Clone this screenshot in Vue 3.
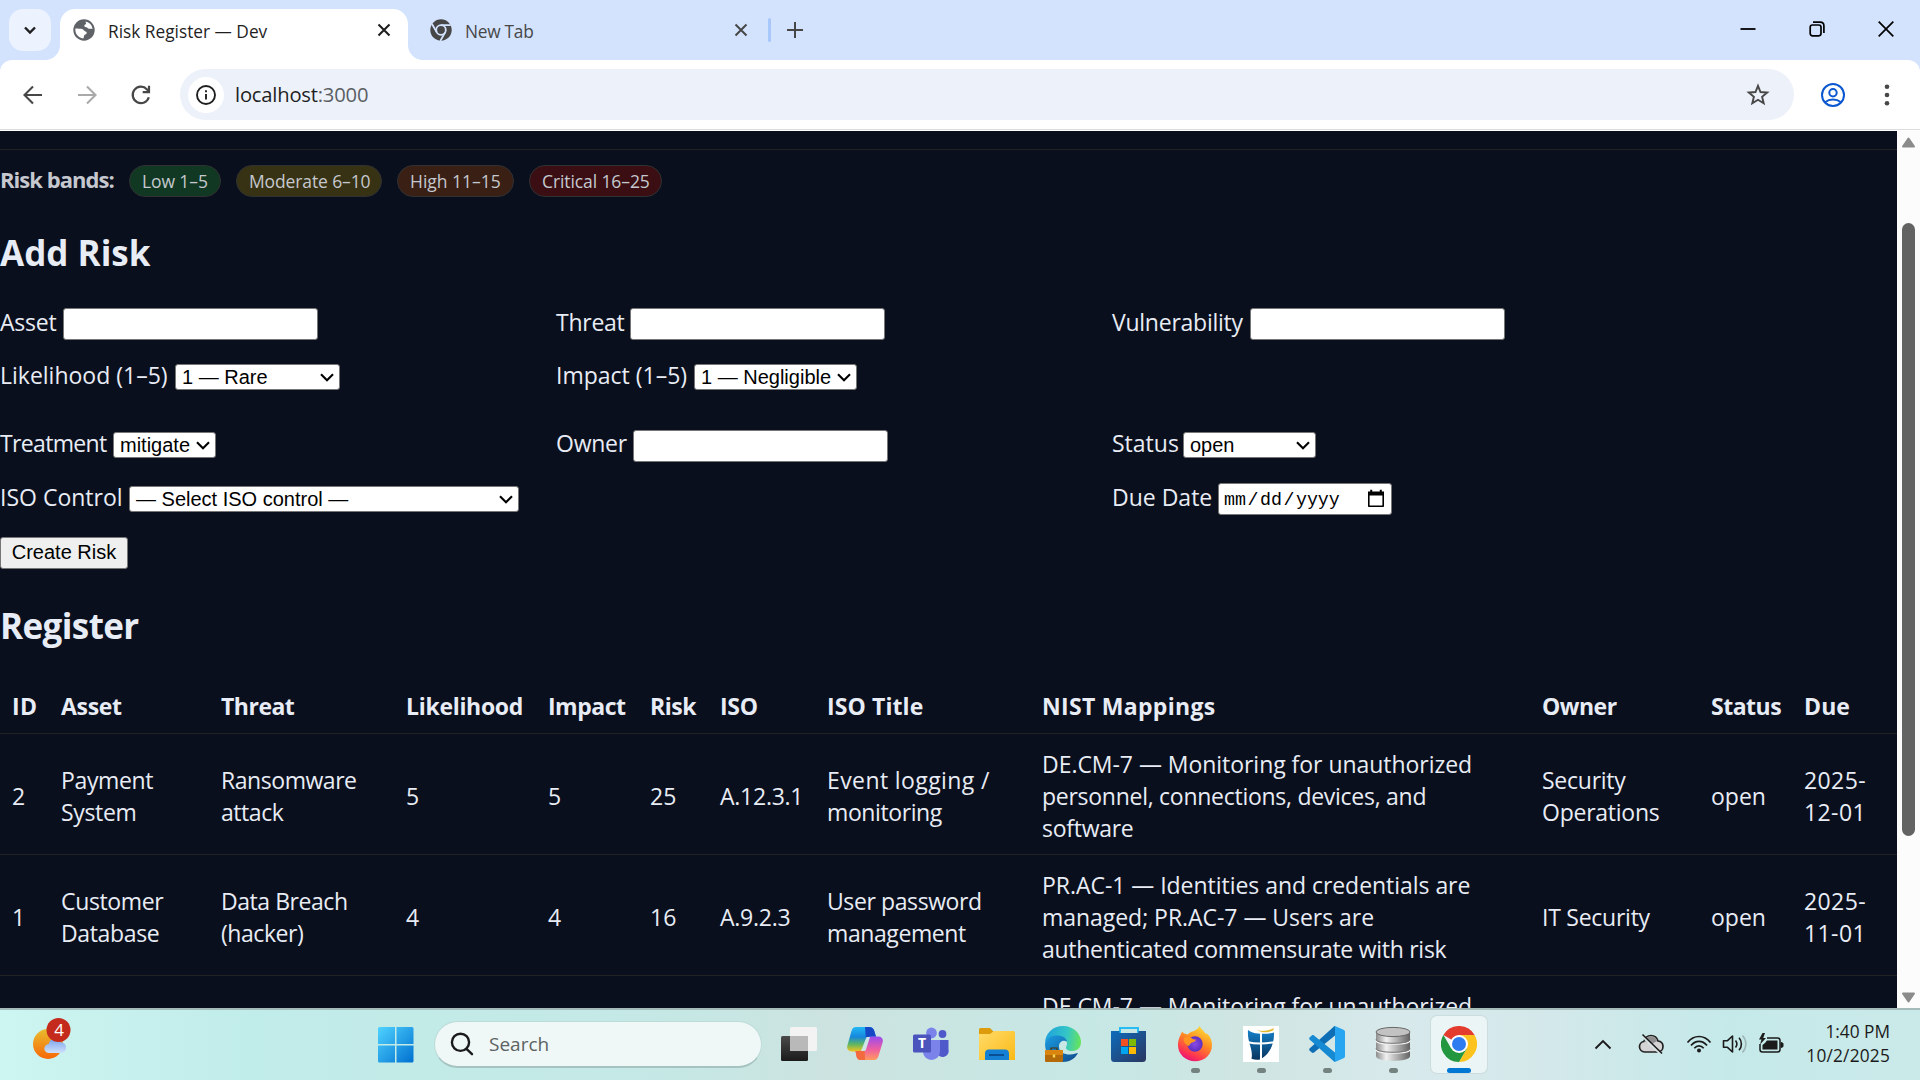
<script setup>
const bands = [
  { name: 'Low 1–5', tone: 'low' },
  { name: 'Moderate 6–10', tone: 'moderate' },
  { name: 'High 11–15', tone: 'high' },
  { name: 'Critical 16–25', tone: 'critical' },
]

const formRows = [
  [
    { label: 'Asset', labelWidth: 63, tone: 'snug', type: 'text', width: 255 },
    { label: 'Threat', labelWidth: 74, tone: 'snug', type: 'text', width: 255 },
    { label: 'Vulnerability', labelWidth: 138, tone: 'snug', type: 'text', width: 255 },
  ],
  [
    { label: 'Likelihood (1–5)', labelWidth: 175, type: 'select', value: '1 — Rare', width: 165 },
    { label: 'Impact (1–5)', labelWidth: 138, type: 'select', value: '1 — Negligible', width: 163 },
  ],
  [
    { label: 'Treatment', labelWidth: 113, tone: 'tight', type: 'select', value: 'mitigate', width: 103 },
    { label: 'Owner', labelWidth: 77, tone: 'snug', type: 'text', width: 255 },
    { label: 'Status', labelWidth: 71, type: 'select', value: 'open', width: 133 },
  ],
  [
    { label: 'ISO Control', labelWidth: 129, type: 'select', value: '— Select ISO control —', width: 390 },
    null,
    { label: 'Due Date', labelWidth: 106, type: 'date', width: 174 },
  ],
]

const columns = [
  { title: 'ID', width: 49, tone: 'wide' },
  { title: 'Asset', width: 160 },
  { title: 'Threat', width: 185, tone: 'snug' },
  { title: 'Likelihood', width: 142 },
  { title: 'Impact', width: 102, tone: 'snug' },
  { title: 'Risk', width: 70, tone: 'snug' },
  { title: 'ISO', width: 107 },
  { title: 'ISO Title', width: 215, tone: 'open' },
  { title: 'NIST Mappings', width: 500, tone: 'wide' },
  { title: 'Owner', width: 169, tone: 'snug' },
  { title: 'Status', width: 93, tone: 'snug' },
  { title: 'Due', width: 105, tone: 'open' },
]

const risks = [
  ['2', 'Payment\nSystem', 'Ransomware\nattack', '5', '5', '25', 'A.12.3.1', 'Event logging /\nmonitoring',
    'DE.CM-7 — Monitoring for unauthorized\npersonnel, connections, devices, and\nsoftware',
    'Security\nOperations', 'open', '2025-\n12-01'],
  ['1', 'Customer\nDatabase', 'Data Breach\n(hacker)', '4', '4', '16', 'A.9.2.3', 'User password\nmanagement',
    'PR.AC-1 — Identities and credentials are\nmanaged; PR.AC-7 — Users are\nauthenticated commensurate with risk',
    'IT Security', 'open', '2025-\n11-01'],
  ['', '', '', '', '', '', '', '',
    'DE.CM-7 — Monitoring for unauthorized\npersonnel, connections, devices, and\nsoftware', '', '', ''],
]

const columnTones = ['', 'c-asset', 'c-threat', '', '', '', 'c-iso', 'c-title', 'c-nist', 'c-owner', '', 'c-due']

const lineTone = (line) => {
  if (line.includes('—')) return 'dashed'
  if (line.endsWith('/')) return 'slashed'
  return ''
}
</script>

<template>
  <div class="screen">
    <header class="tabstrip">
      <button class="tab-search">
        <svg width="14" height="14" viewBox="0 0 14 14"><path d="M2 4.5 7 9.5l5-5" fill="none" stroke="#1f1f1f" stroke-width="2.4" /></svg>
      </button>
      <div class="tab active">
        <svg class="favicon" width="22" height="22" viewBox="0 0 22 22">
          <circle cx="11" cy="11" r="10.7" fill="#5f6368" />
          <path d="M12.6 2.5c3.8.8 6.500 3.600 6.900 7.500-1-.5-2.200-.2-3.500-.3-1.500-.1-1.400-1.400-2.700-1.500-1.700-.1-2.300-.9-1.900-1.900.4-.9 1.700-.7 1.700-2 0-.8-.7-1-.5-1.800z" fill="#fff" />
          <path d="M2.400 9.600c2.600.2 4.900.2 6.700.5 1.700.3 1.800 2 3.400 2.400 1.300.3 1.600 1.300.9 2.300-.6.9-1.900.7-2.300 1.800-.3.900-.1 1.900-.9 2.900C5 18.800 1.800 14.600 2.400 9.600z" fill="#fff" />
        </svg>
        <span class="tab-title">Risk Register — Dev</span>
        <svg class="tab-close" width="14" height="14" viewBox="0 0 14 14"><path d="M1.500 1.500l11 11M12.500 1.500l-11 11" stroke="#1f1f1f" stroke-width="2.100" /></svg>
      </div>
      <div class="tab idle">
        <svg class="favicon" width="22" height="22" viewBox="0 0 22 22">
          <circle cx="11" cy="11" r="10.7" fill="#474747" />
          <circle cx="11" cy="11" r="4.800" fill="none" stroke="#d3e3fd" stroke-width="1.800" />
          <path d="M11 6.200h9.700M6.800 13.400 2 5M15.100 13.400 10.300 22" stroke="#d3e3fd" stroke-width="1.800" />
        </svg>
        <span class="tab-title">New Tab</span>
        <svg class="tab-close" width="14" height="14" viewBox="0 0 14 14"><path d="M1.500 1.500l11 11M12.500 1.500l-11 11" stroke="#474747" stroke-width="2" /></svg>
      </div>
      <i class="divider"></i>
      <svg class="new-tab" width="16" height="16" viewBox="0 0 16 16"><path d="M8 0v16M0 8h16" stroke="#474747" stroke-width="2" /></svg>
      <div class="window-controls">
        <svg width="16" height="16" viewBox="0 0 16 16"><path d="M.5 8h15" stroke="#000" stroke-width="1.800" /></svg>
        <svg width="16" height="16" viewBox="0 0 16 16" fill="none" stroke="#000" stroke-width="1.700"><rect x="1.200" y="4" width="10.800" height="10.800" rx="2.200" /><path d="M4 1.200h7.200c2.300 0 3.700 1.400 3.700 3.700V12" /></svg>
        <svg width="16" height="16" viewBox="0 0 16 16"><path d="M.7.7l14.600 14.600M15.300.7.700 15.300" stroke="#000" stroke-width="1.700" /></svg>
      </div>
    </header>

    <div class="toolbar">
      <svg class="nav-icon" width="24" height="24" viewBox="0 0 24 24" fill="none" stroke="#474747" stroke-width="2.100"><path d="M21 12H4M12 3.500 3.500 12l8.500 8.500" /></svg>
      <svg class="nav-icon" width="24" height="24" viewBox="0 0 24 24" fill="none" stroke="#a9a9a9" stroke-width="2.100"><path d="M3 12h17M12 3.500l8.500 8.500-8.500 8.500" /></svg>
      <svg class="nav-icon" width="24" height="24" viewBox="0 0 24 24" fill="none" stroke="#474747" stroke-width="2.200"><path d="M19.800 14.200a8.200 8.200 0 1 1-1.800-7.800l1.600 1.900" /><path d="M20 2.800v6.300h-6.300" /></svg>
      <div class="omnibox">
        <span class="site-info">
          <svg width="22" height="22" viewBox="0 0 22 22" fill="none" stroke="#1f1f1f" stroke-width="1.900"><circle cx="11" cy="11" r="9" /><path d="M11 10v5.500M11 6.300v2" /></svg>
        </span>
        <span class="url">localhost<em>:3000</em></span>
        <svg class="star" width="24" height="24" viewBox="0 0 24 24"><path d="M12 2.800l2.500 6.200 6.700.5-5.100 4.300 1.600 6.500L12 16.800l-5.700 3.500 1.600-6.500-5.100-4.300 6.700-.5z" fill="none" stroke="#474747" stroke-width="1.900" /></svg>
      </div>
      <svg class="profile" width="26" height="26" viewBox="0 0 26 26" fill="none" stroke="#0b57d0" stroke-width="2"><circle cx="13" cy="13" r="11" /><circle cx="13" cy="10.700" r="3.700" /><path d="M5 20.200c2.300-1.800 5-2.700 8-2.700s5.700.9 8 2.700" /></svg>
      <svg class="more" width="6" height="24" viewBox="0 0 6 24" fill="#474747"><circle cx="3" cy="3.700" r="2.300" /><circle cx="3" cy="12" r="2.300" /><circle cx="3" cy="20.300" r="2.300" /></svg>
    </div>

    <div class="viewport">
      <main class="page">
        <div class="legend">
          <strong>Risk bands:</strong>
          <span v-for="b in bands" :key="b.tone" class="pill" :class="b.tone">{{ b.name }}</span>
        </div>

        <h2 class="add-title">Add Risk</h2>
        <form class="risk-form" @submit.prevent>
          <div v-for="(row, r) in formRows" :key="r" class="form-row" :class="{ spaced: r === 2 }">
            <div v-for="(field, f) in row" :key="f" class="form-cell">
              <label v-if="field" class="field">
                <span class="field-label" :class="field.tone" :style="{ width: field.labelWidth + 'px' }">{{ field.label }}</span>
                <input v-if="field.type === 'text'" type="text" class="text-input" :style="{ width: field.width + 'px' }" />
                <span v-else-if="field.type === 'select'" class="select" :style="{ width: field.width + 'px' }">
                  <span>{{ field.value }}</span>
                  <svg width="14" height="9" viewBox="0 0 14 9"><path d="M1 1.300 7 7.300l6-6" fill="none" stroke="#000" stroke-width="2.100" /></svg>
                </span>
                <span v-else class="date-input" :style="{ width: field.width + 'px' }">
                  <span>mm</span><i>/</i><span>dd</span><i>/</i><span>yyyy</span>
                  <svg width="18" height="19" viewBox="0 0 18 19"><path d="M1.800 4.200v13h14.400v-13z" fill="none" stroke="#000" stroke-width="1.600" stroke-linejoin="round" /><path d="M1 2.600h16v4H1zM3.200.8h2v3h-2zM12.800.8h2v3h-2z" fill="#000" /></svg>
                </span>
              </label>
            </div>
          </div>
          <button class="create">Create Risk</button>
        </form>

        <h2 class="register-title">Register</h2>
        <table class="register">
          <colgroup><col v-for="c in columns" :key="c.title" :style="{ width: c.width + 'px' }" /></colgroup>
          <thead>
            <tr><th v-for="c in columns" :key="c.title" :class="c.tone">{{ c.title }}</th></tr>
          </thead>
          <tbody>
            <tr v-for="(risk, i) in risks" :key="i">
              <td v-for="(cell, j) in risk" :key="j" :class="columnTones[j]">
                <div v-for="(line, k) in cell.split('\n')" :key="k" :class="lineTone(line)">{{ line }}</div>
              </td>
            </tr>
          </tbody>
        </table>
      </main>
      <div class="scrollbar">
        <svg width="15" height="11" viewBox="0 0 15 11"><path d="M7.500 1.500 13 9.500H2z" fill="#8b8b8b" stroke="#8b8b8b" stroke-width="2" stroke-linejoin="round" /></svg>
        <i class="thumb"></i>
        <svg width="15" height="11" viewBox="0 0 15 11"><path d="M7.500 9.500 13 1.500H2z" fill="#8b8b8b" stroke="#8b8b8b" stroke-width="2" stroke-linejoin="round" /></svg>
      </div>
    </div>

    <footer class="taskbar">
      <div class="weather">
        <svg width="42" height="46" viewBox="0 0 42 46">
          <defs>
            <linearGradient id="sun" x1="0" y1="0" x2="0" y2="1"><stop offset="0" stop-color="#e9bd2f" /><stop offset="1" stop-color="#f76707" /></linearGradient>
            <linearGradient id="cloud" x1="0" y1="0" x2="0" y2="1"><stop offset="0" stop-color="#7ba5ee" /><stop offset="1" stop-color="#cfe0fb" /></linearGradient>
          </defs>
          <circle cx="18" cy="29" r="15" fill="url(#sun)" />
          <path d="M19 38a4.500 4.500 0 0 1-.3-9 6.300 6.300 0 0 1 11.800-1.700 5.400 5.400 0 0 1 1.200 10.700z" fill="url(#cloud)" />
          <circle cx="28.500" cy="15" r="12" fill="#c42b1c" />
        </svg>
        <span class="badge">4</span>
      </div>

      <svg class="start" width="36" height="36" viewBox="0 0 36 36">
        <defs><linearGradient id="win" x1="0" y1="0" x2="1" y2="1"><stop offset="0" stop-color="#4fd3ff" /><stop offset="1" stop-color="#0070d0" /></linearGradient></defs>
        <path d="M1.500 0H17v17H0V1.500A1.500 1.500 0 0 1 1.500 0zM18.500 0H34a1.500 1.500 0 0 1 1.500 1.500V17h-17zM0 18.500h17v17H1.500A1.500 1.500 0 0 1 0 34zM18.500 18.500h17V34a1.500 1.500 0 0 1-1.500 1.500H18.500z" fill="url(#win)" />
      </svg>

      <div class="search">
        <svg width="24" height="24" viewBox="0 0 24 24" fill="none" stroke="#1b1b1b" stroke-width="2.400" stroke-linecap="round"><circle cx="10.500" cy="10.300" r="8.600" /><path d="M16.500 16.800l5.500 5.400" /></svg>
        <span>Search</span>
      </div>

      <div class="apps">
        <span class="app"><svg width="36" height="36" viewBox="0 0 36 36">
          <defs><linearGradient id="tv" x1="0" y1="0" x2="0" y2="1"><stop offset="0" stop-color="#4a4a4a" /><stop offset="1" stop-color="#1b1b1b" /></linearGradient></defs>
          <rect x="0" y="10" width="27" height="25" rx="1.500" fill="url(#tv)" />
          <rect x="9" y="1" width="27" height="24" rx="1.500" fill="#f3f3f3" /><path d="M9 10h18v15H9z" fill="#b9b9b9" />
        </svg></span>

        <span class="app"><svg width="36" height="36" viewBox="0 0 36 36">
          <defs>
            <linearGradient id="cpA" x1="0" y1="0" x2="0" y2="1"><stop offset="0" stop-color="#22b8f5" /><stop offset=".4" stop-color="#1687dd" /><stop offset=".7" stop-color="#5db564" /><stop offset="1" stop-color="#f4c61c" /></linearGradient>
            <linearGradient id="cpB" x1="0" y1="0" x2="0" y2="1"><stop offset="0" stop-color="#9a4bf0" /><stop offset=".55" stop-color="#ee5fa0" /><stop offset="1" stop-color="#ff9a5c" /></linearGradient>
          </defs>
          <path d="M9 1h13c3 0 4.500 1.500 5.300 4L29 11h-5c-3 0-4.500 1-5.500 4L16 22c-1 2.500-2.500 3.500-5 3.500H5c-4 0-5.500-2.500-4.600-6L4.500 5C5.300 2.300 6.500 1 9 1z" fill="url(#cpA)" />
          <path d="M18 1h4c3 0 4.500 1.500 5.300 4L29 10.500h-5c-3 0-4 1-5 3.500z" fill="#1648c5" />
          <path d="M27 34H14c-3 0-4-1.500-4.600-4L8.500 25H12c3 0 4.500-1 5.500-4L20 14c1-2.500 2-3.500 4.500-3.500H31c4 0 5.500 2.500 4.600 6L31.500 30c-.8 2.700-2 4-4.500 4z" fill="url(#cpB)" />
          <path d="M18 34h-4c-3 0-4-1.500-4.600-4L8.500 25H12c3 0 4.500-1 5.500-3.500z" fill="#f26a3d" />
          <path d="M19.500 11H23l-4 12.500c-.5 1.200-1 1.500-2 1.500h-3z" fill="#cbe6e5" />
        </svg></span>

        <span class="app"><svg width="36" height="36" viewBox="0 0 36 36">
          <circle cx="29.500" cy="8" r="3.900" fill="#5059c9" /><circle cx="18.500" cy="7" r="5.400" fill="#7b83eb" />
          <path d="M24 14h11.500v9.500a5.500 5.500 0 0 1-11.500 3z" fill="#5059c9" />
          <path d="M10 14h17v11.500a8.500 8.500 0 0 1-17 0z" fill="#7b83eb" />
          <rect x="0" y="8.500" width="18" height="18" rx="1.500" fill="#4b53bc" />
        </svg><b class="teams-letter">T</b></span>

        <span class="app"><svg width="36" height="36" viewBox="0 0 36 36">
          <defs><linearGradient id="fold" x1="0" y1="0" x2="1" y2="1"><stop offset="0" stop-color="#ffdc6b" /><stop offset="1" stop-color="#fbb915" /></linearGradient></defs>
          <path d="M1.500 2H11l3.500 3.500L12 12H0V3.500A1.500 1.500 0 0 1 1.500 2z" fill="#dd9c0b" />
          <path d="M0 8h11l4-3h19.500A1.500 1.500 0 0 1 36 6.500V34H0z" fill="url(#fold)" />
          <path d="M6 34v-6.500a4 4 0 0 1 4-4h16a4 4 0 0 1 4 4V34z" fill="#1480d3" /><path d="M10 29h15" stroke="#0a4f94" stroke-width="2" />
        </svg></span>

        <span class="app"><svg width="36" height="36" viewBox="0 0 36 36">
          <defs>
            <linearGradient id="edA" x1="0" y1=".4" x2="1" y2=".5"><stop offset="0" stop-color="#1fa2dc" /><stop offset=".6" stop-color="#35c6c6" /><stop offset="1" stop-color="#66e45a" /></linearGradient>
            <linearGradient id="edB" x1="0" y1="0" x2="1" y2="1"><stop offset="0" stop-color="#1b9de2" /><stop offset="1" stop-color="#114a8b" /></linearGradient>
          </defs>
          <path d="M0 18C0 7 8 0 18 0c11 0 18 8 18 16 0 6-4 9-9 9-4 0-6-1.500-6-3.500 0-1 1-1.500 1-4C22 13 18 10 12 10 6 10 1 13 0 18z" fill="url(#edA)" />
          <path d="M0 18C1 12 6 9.500 12 9.500c5 0 9 2 10 6-5-2-8 1-8 5 0 6 5 8 11 8 4 0 6-1.500 8-1.500C30 33 24 36 18 36 7 36 0 28 0 18z" fill="url(#edB)" />
          <rect x="0" y="24" width="18" height="12" rx="1" fill="#b46a08" /><path d="M0 24h18v5H0z" fill="#d98510" /><path d="M6 24v-2h6v2" fill="none" stroke="#4b3206" stroke-width="1.200" /><path d="M7.800 28.500h2.400v3H7.800z" fill="#ffd84a" />
        </svg></span>

        <span class="app"><svg width="36" height="36" viewBox="0 0 36 36">
          <defs><linearGradient id="store" x1="0" y1="0" x2="1" y2="1"><stop offset="0" stop-color="#0e6cbd" /><stop offset="1" stop-color="#2b365e" /></linearGradient></defs>
          <path d="M9 9V2h18v7" fill="none" stroke="#27bdf3" stroke-width="2" />
          <path d="M0 5h8.500v2h19V5H35v27.500A3.500 3.500 0 0 1 31.500 36h-28A3.500 3.500 0 0 1 0 32.500z" fill="url(#store)" />
          <path d="M10 13h7v7h-7z" fill="#f25022" /><path d="M18 13h7v7h-7z" fill="#7fba00" /><path d="M10 21h7v7h-7z" fill="#00a4ef" /><path d="M18 21h7v7h-7z" fill="#ffb900" />
        </svg></span>

        <span class="app running"><svg width="36" height="36" viewBox="0 0 36 36">
          <defs>
            <linearGradient id="ffA" x1=".8" y1="0" x2=".3" y2="1"><stop offset="0" stop-color="#ffe43a" /><stop offset=".45" stop-color="#ff8a22" /><stop offset=".8" stop-color="#ff3750" /><stop offset="1" stop-color="#e5107c" /></linearGradient>
            <radialGradient id="ffB"><stop offset="0" stop-color="#8b4be8" /><stop offset="1" stop-color="#5b2fc0" /></radialGradient>
          </defs>
          <path d="M5 5.500c1.500 2 3 2.500 5.500 3 2-2 4-3 6-3.200C19 4 21.500 2.500 22.500 0c1.500 3 4 4.500 5.500 7 1.500 1 2 .5 2.500 1C33.500 11 35 14.500 35 19c0 9.500-7.500 16.300-16.800 16.300S1 28.500 1 19.300C1 13 3 11 5 5.500z" fill="url(#ffA)" />
          <circle cx="18" cy="18" r="7.700" fill="url(#ffB)" />
          <path d="M7 12c3-1.500 6-1.500 8 .5 1 1 3 1 4 1-.5 2.500-3 2.500-5 3.500-1 1-1 2.500-2.500 3C8 18 6 15 7 12z" fill="#ff9420" />
        </svg></span>

        <span class="app running"><svg width="36" height="36" viewBox="0 0 36 36">
          <defs><linearGradient id="flag" x1="0" y1="0" x2="0" y2="1"><stop offset="0" stop-color="#1580c9" /><stop offset="1" stop-color="#0a355f" /></linearGradient></defs>
          <path d="M0 0h36v36H0z" fill="#fff" />
          <path d="M5 4c3 2.200 6 3.200 10 3.500 5 .6 11 .2 16-1C31.500 19 26 29 17 33.500c-3 .5-6 .2-8.500-.8C10.500 22 4 17 5 4z" fill="url(#flag)" />
          <path d="M4 16c8 2 18 2 28 0M18 6v30" fill="none" stroke="#fff" stroke-width="2" />
          <path d="M13 3.500c6.500 1.700 13 1 18-2v2.700C26 7.500 18 7.800 13 3.500z" fill="#e2b82c" stroke="#fff" stroke-width=".8" />
        </svg></span>

        <span class="app running"><svg width="36" height="36" viewBox="0 0 36 36">
          <path d="M26 0v9.500L5 26.500c-.8.600-1.500.6-2.200 0L.8 24.700c-.8-.8-.8-1.700 0-2.500L25 .5z" fill="#0d6db5" />
          <path d="M26 36v-9.500L5 9.500C4.200 8.900 3.500 8.900 2.800 9.500L.8 11.300c-.8.800-.8 1.700 0 2.500L25 35.500z" fill="#1689d3" />
          <path d="M26 0l8.500 3.700c1 .5 1.500 1.200 1.500 2.300v24c0 1.100-.5 1.800-1.500 2.300L26 36z" fill="#27a5f0" />
        </svg></span>

        <span class="app running"><svg width="36" height="36" viewBox="0 0 36 36">
          <defs><linearGradient id="db"><stop offset="0" stop-color="#8c8c8c" /><stop offset=".3" stop-color="#f1f1f1" /><stop offset="1" stop-color="#626262" /></linearGradient></defs>
          <path d="M1 6v24c0 6.500 34 6.500 34 0V6z" fill="url(#db)" />
          <ellipse cx="18" cy="6" rx="17" ry="4.600" fill="#c2c2c2" stroke="#686868" stroke-width="1" />
          <path d="M1 14.500c0 5 34 5 34 0M1 23.500c0 5 34 5 34 0" fill="none" stroke="#f0f0f0" stroke-width="1.200" /><path d="M1 13.500c0 5 34 5 34 0M1 22.500c0 5 34 5 34 0" fill="none" stroke="#777" stroke-width="1" />
        </svg></span>

        <span class="app current"><svg width="36" height="36" viewBox="0 0 36 36">
          <path d="M18 18 2.400 9A18 18 0 0 1 33.600 9z" fill="#e33b2e" />
          <path d="M18 9h15.600A18 18 0 0 1 18 36l7.800-13.500z" fill="#fcc31e" />
          <path d="M25.800 22.500 18 36A18 18 0 0 1 2.400 9l7.800 13.500z" fill="#22973f" />
          <circle cx="18" cy="18" r="9" fill="#fff" /><circle cx="18" cy="18" r="7" fill="#2f7bf0" />
        </svg></span>
      </div>

      <div class="tray">
        <svg class="chevron" width="18" height="12" viewBox="0 0 18 12"><path d="M1.500 10.500 9 3l7.500 7.500" fill="none" stroke="#1b1b1b" stroke-width="1.900" /></svg>
        <svg class="onedrive" width="26" height="24" viewBox="0 0 26 24">
          <path d="M6.500 20a5.300 5.300 0 0 1-.7-10.500C7 5.500 10 3.500 13 3.500c3.500 0 6 2 7 5.500 3 .3 5 2.500 5 5.500 0 3.200-2.300 5.500-5.500 5.500z" fill="#d4d4d4" stroke="#222" stroke-width="1.700" />
          <path d="M6.500 9.500C8 5.500 11 4.300 13.500 4.400c3 .2 4.800 1.800 5.600 4.600l-5 3z" fill="#8f8f8f" />
          <path d="M4.500 4 22.500 21.500" stroke="#dbe6e6" stroke-width="2.800" /><path d="M4.500 2.500 24 21.500" stroke="#1b1b1b" stroke-width="1.600" />
        </svg>
        <svg class="wifi" width="26" height="20" viewBox="0 0 26 20" fill="none" stroke="#1b1b1b" stroke-width="1.700"><path d="M1.500 8.500c6.500-8 16.500-8 23 0M5 11.500c4.600-5.500 11.400-5.500 16 0M8.300 14.300c2.800-3.200 6.600-3.200 9.400 0" /><circle cx="13" cy="16.500" r="2" fill="#1b1b1b" stroke="none" /></svg>
        <svg class="speaker" width="26" height="22" viewBox="0 0 26 22" fill="none" stroke="#1b1b1b" stroke-width="1.600"><path d="M1.500 7.700h4L10.500 3v16l-5-4.700h-4z" stroke-linejoin="round" /><path d="M13.500 7.500c1.600 2 1.600 5 0 7M17 4.800c3.200 3.500 3.200 9 0 12.400" /><path d="M20.500 2.500c4.500 5 4.500 12 0 17" stroke="#9fb8b8" /></svg>
        <svg class="battery" width="26" height="22" viewBox="0 0 26 22"><path d="M9 5h10.500A2.500 2.500 0 0 1 22 7.500v9a2.500 2.500 0 0 1-2.500 2.500h-15A2.500 2.500 0 0 1 2 16.500V11" fill="none" stroke="#1b1b1b" stroke-width="1.500" /><path d="M9 7.500h10.500v9h-15V12L7 10z" fill="#1b1b1b" /><path d="M23 9.500l2 .8v3.400l-2 .8z" fill="#1b1b1b" stroke="#1b1b1b" /><path d="M4.500 0 1 6.500h2.500L2 11.500 8 5H5.200L7 0z" fill="#1b1b1b" /></svg>
        <div class="clock"><span>1:40 PM</span><span class="date">10/2/2025</span></div>
      </div>
    </footer>
  </div>
</template>

<style>
body {
  margin: 0;
  overflow: hidden;
}
</style>

<style scoped>
.screen {
  width: 1920px;
  height: 1080px;
  display: flex;
  flex-direction: column;
  overflow: hidden;
  font-family: "Open Sans", "Noto Sans", sans-serif;
  background: #d3e3fd;
}
.screen * { box-sizing: border-box; }
svg { display: block; flex: none; }
i, em { font-style: normal; }

/* Tab strip */
.tabstrip {
  height: 60px;
  flex: none;
  display: flex;
  padding: 9px 26px 0 9px;
}
.tab-search {
  width: 42px;
  height: 42px;
  border: 0;
  border-radius: 14px;
  background: #ecf2fe;
  display: flex;
  align-items: center;
  justify-content: center;
  padding: 0;
}
.tab {
  height: 51px;
  display: flex;
  align-items: center;
  padding-bottom: 9px;
  font-size: 17.300px;
}
.tab.active {
  position: relative;
  width: 348px;
  margin-left: 9px;
  padding-left: 13px;
  padding-right: 17px;
  background: #fff;
  border-radius: 15px 15px 0 0;
  color: #1f1f1f;
}
.tab.active::before,
.tab.active::after {
  content: "";
  position: absolute;
  bottom: 0;
  width: 15px;
  height: 15px;
}
.tab.active::before { left: -15px; background: radial-gradient(circle at 0 0, transparent 14.500px, #fff 15.500px); }
.tab.active::after { right: -15px; background: radial-gradient(circle at 15px 0, transparent 14.500px, #fff 15.500px); }
.tab.idle {
  width: 340px;
  padding-left: 22px;
  color: #474747;
  letter-spacing: -0.25px;
}
.tab-title { margin-left: 13px; flex: 1; line-height: 24px; padding-top: 3px; white-space: nowrap; }
.divider { width: 3px; height: 24px; margin: 9px 0 0 20px; border-radius: 2px; background: #a8c7fa; }
.new-tab { margin: 13px 0 0 16px; }
.window-controls { display: flex; gap: 53px; margin: 12px 0 0 auto; }

/* Toolbar */
.toolbar {
  height: 71px;
  flex: none;
  display: flex;
  align-items: center;
  padding: 0 30px 2px 21px;
  background: #fff;
  border-radius: 12px 12px 0 0;
  box-shadow: inset 0 -1px #fff, inset 0 -2px #dcdddf;
}
.nav-icon { margin-right: 30px; }
.omnibox {
  width: 1614px;
  height: 51px;
  margin-left: -3px;
  display: flex;
  align-items: center;
  border-radius: 26px;
  background: #ecf1fa;
  padding: 0 24px 0 8px;
}
.site-info {
  width: 36px;
  height: 36px;
  border-radius: 50%;
  background: #fff;
  display: flex;
  align-items: center;
  justify-content: center;
}
.url { margin-left: 11px; padding-bottom: 2px; font-size: 20.200px; letter-spacing: -0.2px; color: #1f1f1f; }
.url em { color: #5b5e62; }
.star { margin-left: auto; }
.profile { margin-left: 26px; }
.more { margin-left: 38px; }

/* Page */
.viewport {
  height: 877px;
  flex: none;
  display: flex;
  overflow: hidden;
  background: #0a0f1e;
}
.page {
  width: 1897px;
  flex: none;
  color: #e8ecf4;
  font-size: 23px;
  line-height: 32px;
}
.legend {
  height: 66px;
  margin-top: 18px;
  border-top: 1px solid #202224;
  padding-top: 15px;
  display: flex;
  align-items: flex-start;
  color: #c5c8ce;
}
.legend strong { width: 129px; font-size: 22px; line-height: 28px; letter-spacing: -0.95px; white-space: nowrap; }
.pill {
  height: 32px;
  padding: 0 0 0 12px;
  margin-right: 15px;
  border: 1px solid #2f3132;
  border-radius: 16px;
  font-size: 17.500px;
  line-height: 31px;
  white-space: nowrap;
}
.pill.low { width: 92px; background: #103823; letter-spacing: -0.1px; }
.pill.moderate { width: 146px; background: #373213; letter-spacing: -0.12px; }
.pill.high { width: 117px; background: #391f14; }
.pill.critical { width: 133px; background: #3a0e13; letter-spacing: -0.1px; }

h2 {
  margin: 0;
  font-size: 35px;
  line-height: 48px;
  font-weight: 700;
}
.add-title { margin-top: 14px; }
.risk-form { margin-top: 31px; display: flex; flex-direction: column; gap: 21px; align-items: flex-start; }
.form-row { display: flex; height: 32px; }
.form-row.spaced { margin-top: 16px; }
.form-cell { width: 556px; }
.field { height: 32px; display: flex; align-items: center; }
.field-label { flex: none; padding-bottom: 4px; white-space: nowrap; }
.spaced .field-label { padding-bottom: 6px; }
.field-label.snug { letter-spacing: -0.25px; }
.field-label.tight { letter-spacing: -0.65px; }
.text-input {
  height: 32px;
  padding: 0 4px;
  border: 1px solid #767676;
  border-radius: 3px;
  background: #fff;
  font: 20px "Liberation Sans", Arial, sans-serif;
}
.select {
  height: 26px;
  display: flex;
  align-items: center;
  justify-content: space-between;
  padding: 0 5px 0 6px;
  border: 1px solid #767676;
  border-radius: 3px;
  background: #fff;
  color: #000;
  font: 20px/24px "Liberation Sans", Arial, sans-serif;
  white-space: nowrap;
}
.spaced .select { margin-bottom: 2px; }
.date-input {
  height: 32px;
  display: flex;
  align-items: center;
  padding: 1px 6px 0 5px;
  border: 1px solid #767676;
  border-radius: 3px;
  background: #fff;
  color: #000;
  font: 18.300px/30px "Liberation Mono", monospace;
}
.date-input i { width: 14px; text-align: center; }
.date-input svg { margin: 0 0 2px auto; }
.create {
  width: 128px;
  height: 32px;
  margin-top: 1px;
  padding: 0 0 2px;
  border: 1px solid #767676;
  border-radius: 3px;
  background: #efefef;
  color: #000;
  font: 20px "Liberation Sans", Arial, sans-serif;
}
.register-title { margin-top: 33px; letter-spacing: -0.6px; }
.register {
  width: 1897px;
  margin-top: 26px;
  table-layout: fixed;
  border-collapse: collapse;
}
th, td {
  padding: 14px 0 10px 12px;
  border-bottom: 1px solid #202224;
  text-align: left;
  white-space: nowrap;
}
th { letter-spacing: -0.3px; }
tr { height: 121px; }
thead tr { height: 57px; }
th.snug { letter-spacing: -0.5px; }
th.open { letter-spacing: 0.1px; }
th.wide { letter-spacing: 0.3px; }
.c-asset { letter-spacing: -0.35px; }
.c-threat { letter-spacing: -0.45px; }
.c-title { letter-spacing: -0.4px; }
.c-iso { letter-spacing: -0.25px; }
.c-nist { letter-spacing: -0.27px; }
.c-owner { letter-spacing: -0.25px; }
.c-due { letter-spacing: 0.4px; }
.slashed { letter-spacing: 0.4px; }
.dashed { letter-spacing: -0.04px; }

.scrollbar {
  width: 23px;
  background: #fcfcfc;
  display: flex;
  flex-direction: column;
  align-items: center;
  padding: 6px 0 5px;
}
.thumb { width: 13px; height: 613px; margin: 75px 0 auto; border-radius: 7px; background: #636363; }

/* Taskbar */
.taskbar {
  height: 72px;
  flex: none;
  display: flex;
  align-items: flex-start;
  border-top: 2px solid #a5bbba;
  background: linear-gradient(90deg, #cdf5f1 0, #c0ece9 13%, #c5e8e5 35%, #cce3e0 43%, #c6e8e5 57%, #cfe5e2 65%, #d8e9ec 73%, #d4e8ea 80%, #c5e9e9 90%, #caeae9 100%);
}
.weather { position: relative; width: 42px; margin: 5px 0 0 30px; }
.badge { position: absolute; left: 17px; top: 3px; width: 24px; text-align: center; color: #fff; font-size: 17px; line-height: 24px; }
.start { margin: 17px 0 0 306px; }
.search {
  width: 328px;
  height: 47px;
  margin: 11px 0 0 20px;
  padding-left: 15px;
  display: flex;
  align-items: center;
  border: 1px solid #bcdcd8;
  border-bottom: 2px solid #a5c3c0;
  border-radius: 24px;
  background: #eff7f7;
}
.search span { margin-left: 15px; font-size: 19px; color: #5d6262; }
.apps { display: flex; gap: 10px; margin: 6px 0 0 9px; }
.app {
  position: relative;
  width: 56px;
  height: 57px;
  display: flex;
  justify-content: center;
  padding-top: 10px;
}
.teams-letter { position: absolute; left: 10px; top: 18px; width: 18px; color: #fff; font-size: 14px; line-height: 18px; text-align: center; }
.app.running::after,
.app.current::after {
  content: "";
  position: absolute;
  left: 24px;
  bottom: 0;
  width: 9px;
  height: 5px;
  border-radius: 3px;
  background: #748280;
}
.app.current { background: #ebf5f6; border-radius: 6px; box-shadow: 0 0 0 1px #cbdddf; }
.app.current::after { left: 16px; width: 24px; background: #0078d4; }
.tray { display: flex; align-items: center; height: 70px; margin-left: 107px; padding-bottom: 2px; }
.onedrive { margin-left: 26px; }
.wifi { margin-left: 22px; }
.speaker { margin-left: 10px; }
.battery { margin-left: 10px; }
.clock {
  width: 106px;
  display: flex;
  flex-direction: column;
  align-items: flex-end;
  font-size: 17.300px;
  line-height: 24px;
  color: #1b1b1b;
  white-space: nowrap;
}
.clock .date { letter-spacing: 0.2px; }
</style>
